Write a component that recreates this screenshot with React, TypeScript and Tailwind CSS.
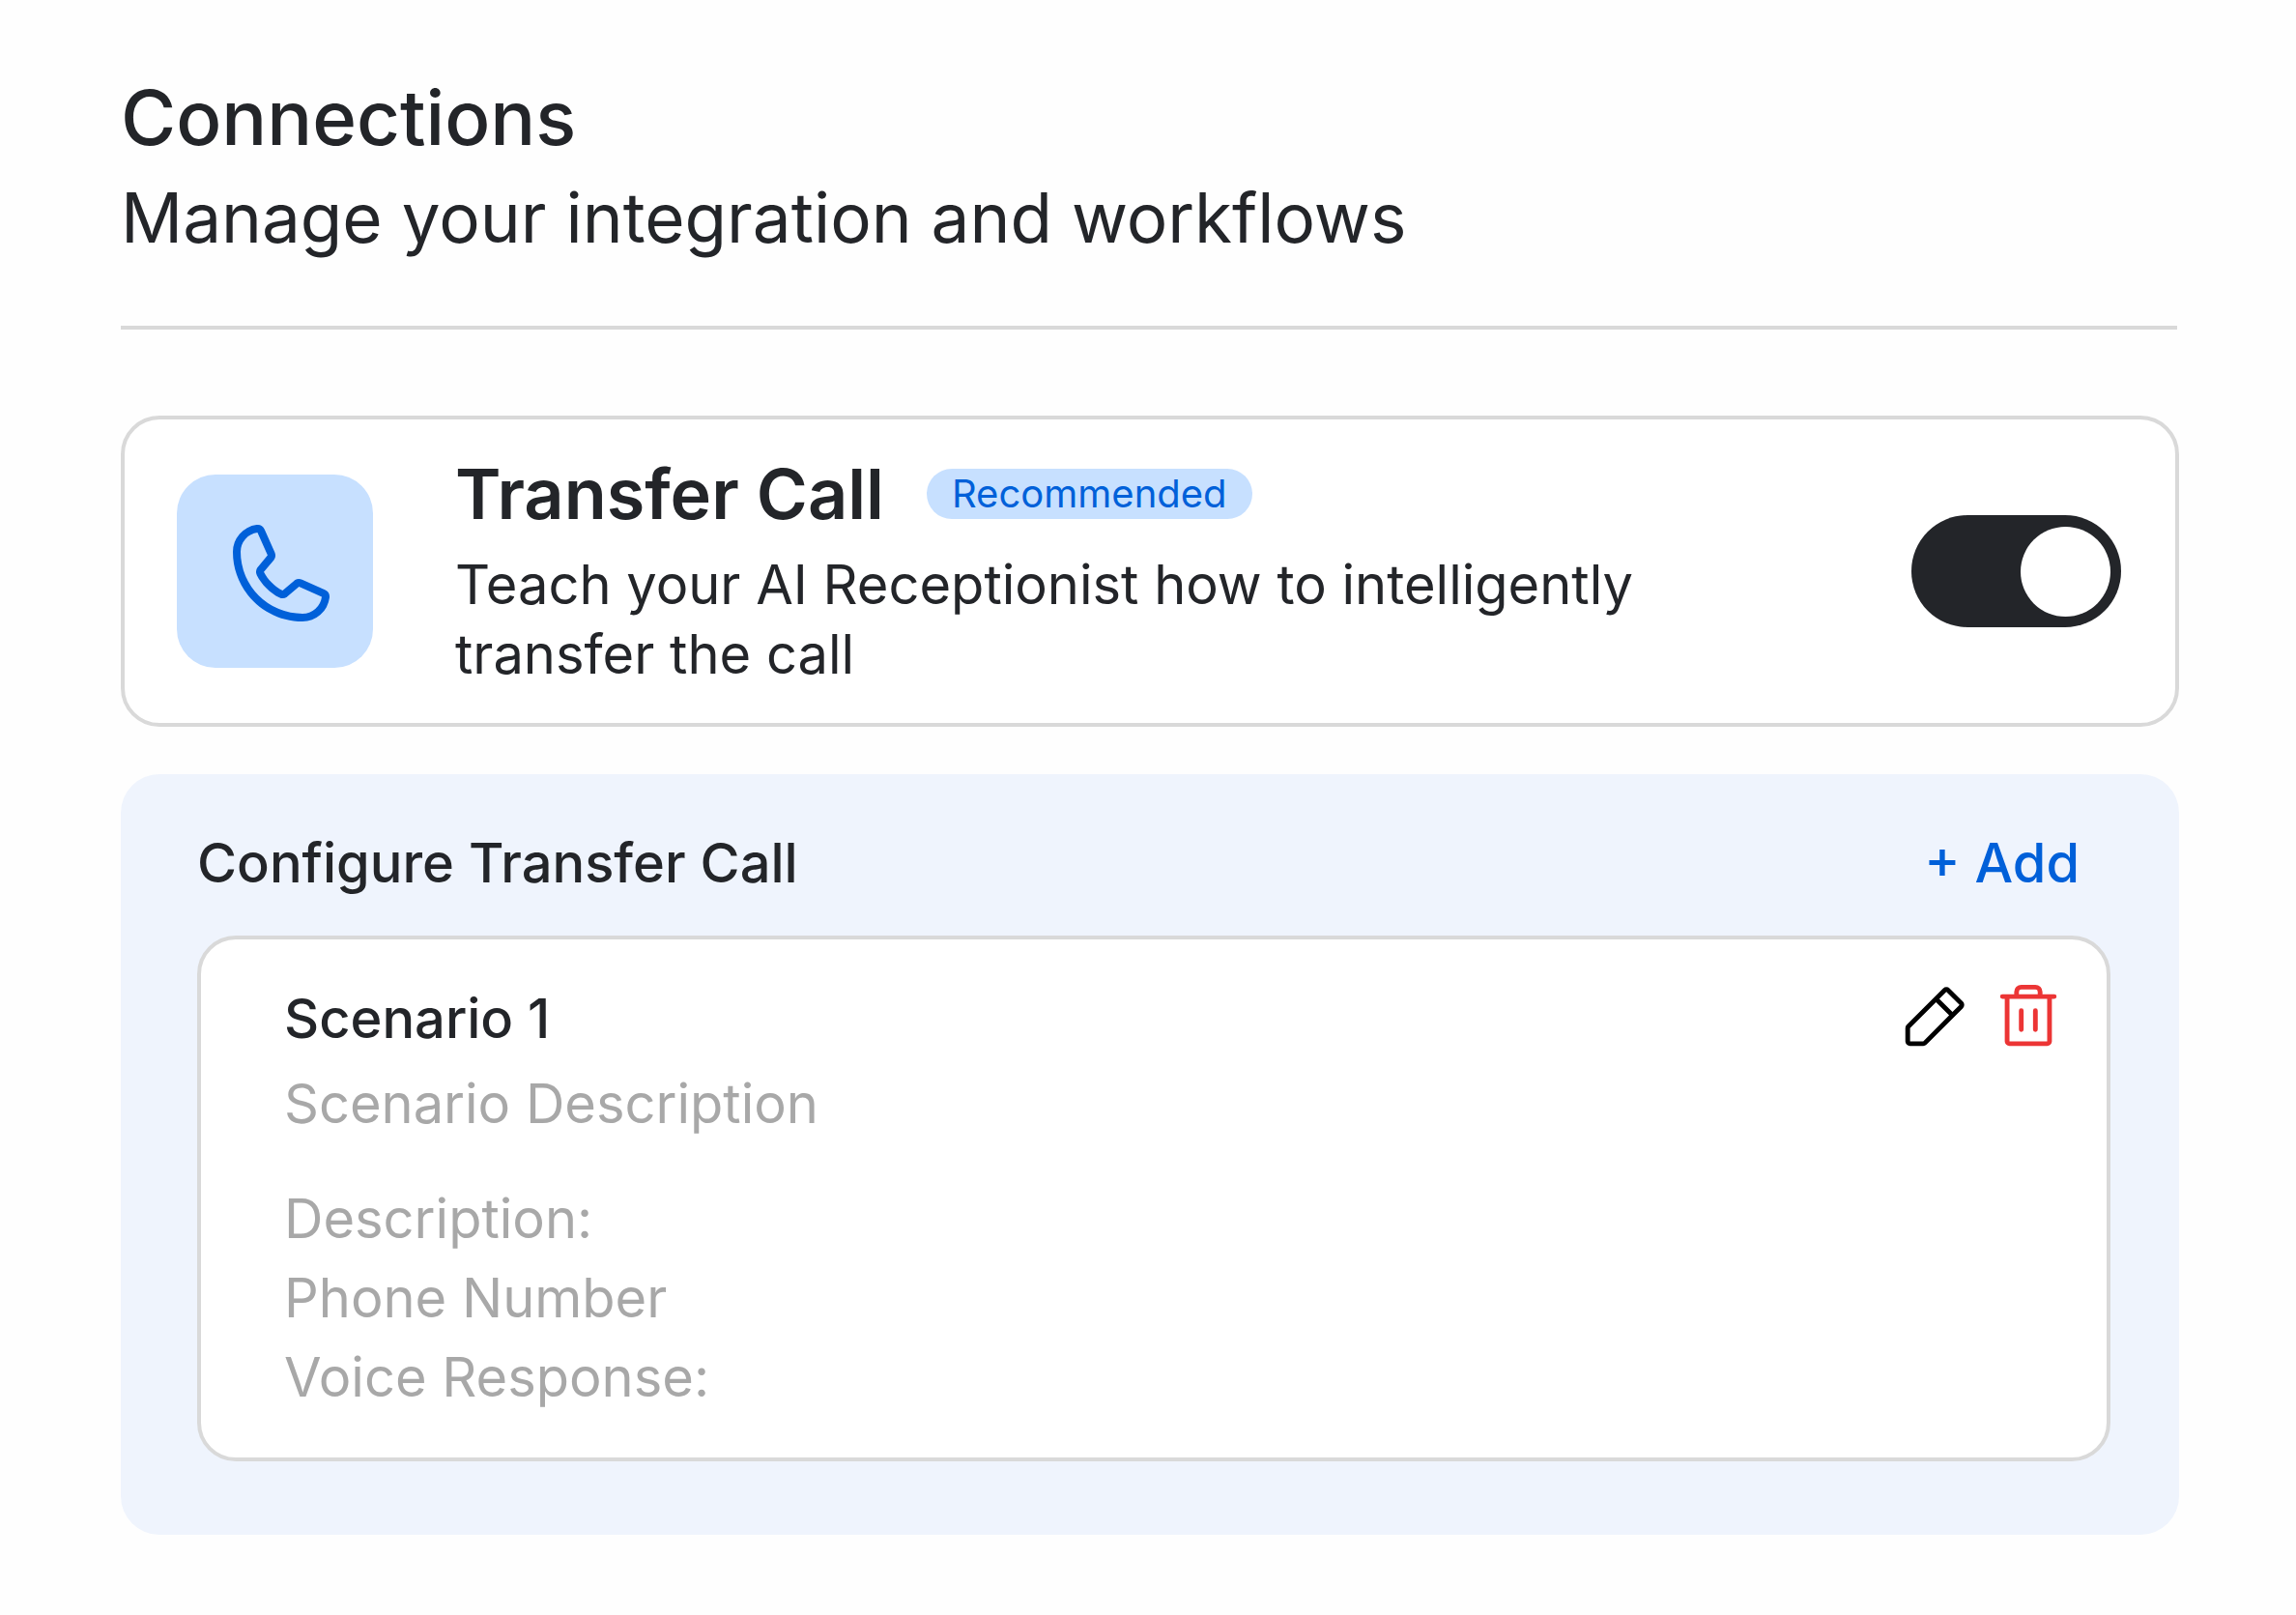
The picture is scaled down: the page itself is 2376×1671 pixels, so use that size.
import { useState } from "react";
import { PiPencilSimple, PiPhone, PiTrash } from "react-icons/pi";

const details = ["Description:", "Phone Number", "Voice Response:"];

function Header() {
  return (
    <header className="mr-0.5 border-b-4 border-[#d9d9d9] pb-16">
      <h1 className="text-[78px] leading-[96px] font-medium">Connections</h1>
      <p className="mt-[7px] text-[71px] leading-[96px]">Manage your integration and workflows</p>
    </header>
  );
}

function TransferCallCard() {
  const [enabled, setEnabled] = useState(true);
  return (
    <section className="mt-[89px] flex items-center rounded-[40px] border-4 border-[#d9d9d9] bg-white py-[35px] pr-14 pl-[54px]">
      <div className="flex h-[200px] w-[203px] shrink-0 items-center justify-center rounded-[40px] bg-[#c7e0ff] pt-2 pl-2 text-[#0060d9]">
        <PiPhone size={128} aria-hidden="true" />
      </div>
      <div className="ml-[85px] max-w-[1300px] flex-1">
        <div className="flex items-center gap-11">
          <h2 id="transfer-call" className="text-[72px] leading-[84px] font-semibold">
            Transfer Call
          </h2>
          <span className="rounded-full bg-[#c7e0ff] px-[26px] text-[40px] leading-[52px] text-[#0060d9]">
            Recommended
          </span>
        </div>
        <p className="mt-4 text-[56px] leading-[72px]">
          Teach your AI Receptionist how to intelligently transfer the call
        </p>
      </div>
      <input
        type="checkbox"
        role="switch"
        aria-labelledby="transfer-call"
        checked={enabled}
        onChange={(e) => setEnabled(e.target.checked)}
        className="ml-auto flex h-[116px] w-[217px] shrink-0 cursor-pointer appearance-none items-center rounded-full bg-[#a8a8a8] px-[11px] before:size-[93px] before:rounded-full before:bg-white before:content-[''] checked:justify-end checked:bg-[#232529]"
      />
    </section>
  );
}

function ConfigurePanel() {
  return (
    <section className="mt-[49px] rounded-[40px] bg-[#eff4fd] pt-14 pr-[71px] pb-[76px] pl-[79px]">
      <div className="flex items-center justify-between pr-8">
        <h2 className="text-[56px] leading-[72px] font-medium">Configure Transfer Call</h2>
        <button type="button" className="text-[56px] leading-[72px] font-medium text-[#0060d9]">
          + Add
        </button>
      </div>
      <article className="mt-[39px] flex items-start justify-between rounded-[40px] border-4 border-[#d9d9d9] bg-white pt-[42px] pr-[42px] pb-[42px] pl-[86px] text-[56px] leading-[72px]">
        <div className="pt-1">
          <h3 className="font-medium">Scenario 1</h3>
          <p className="mt-4 text-[#a8a8a8]">Scenario Description</p>
          <ul className="mt-[42px] leading-[82px] text-[#a8a8a8]">
            {details.map((label) => (
              <li key={label}>{label}</li>
            ))}
          </ul>
        </div>
        <div className="flex gap-5">
          <button type="button" aria-label="Edit scenario" className="text-black">
            <PiPencilSimple size={78} />
          </button>
          <button type="button" aria-label="Delete scenario" className="text-[#ec3535]">
            <PiTrash size={78} />
          </button>
        </div>
      </article>
    </section>
  );
}

export default function App() {
  return (
    <main className="min-h-screen bg-[#fefefe] pt-[74px] pr-[121px] pb-[83px] pl-[125px] font-['Inter',sans-serif] text-[#232529]">
      <Header />
      <TransferCallCard />
      <ConfigurePanel />
    </main>
  );
}
